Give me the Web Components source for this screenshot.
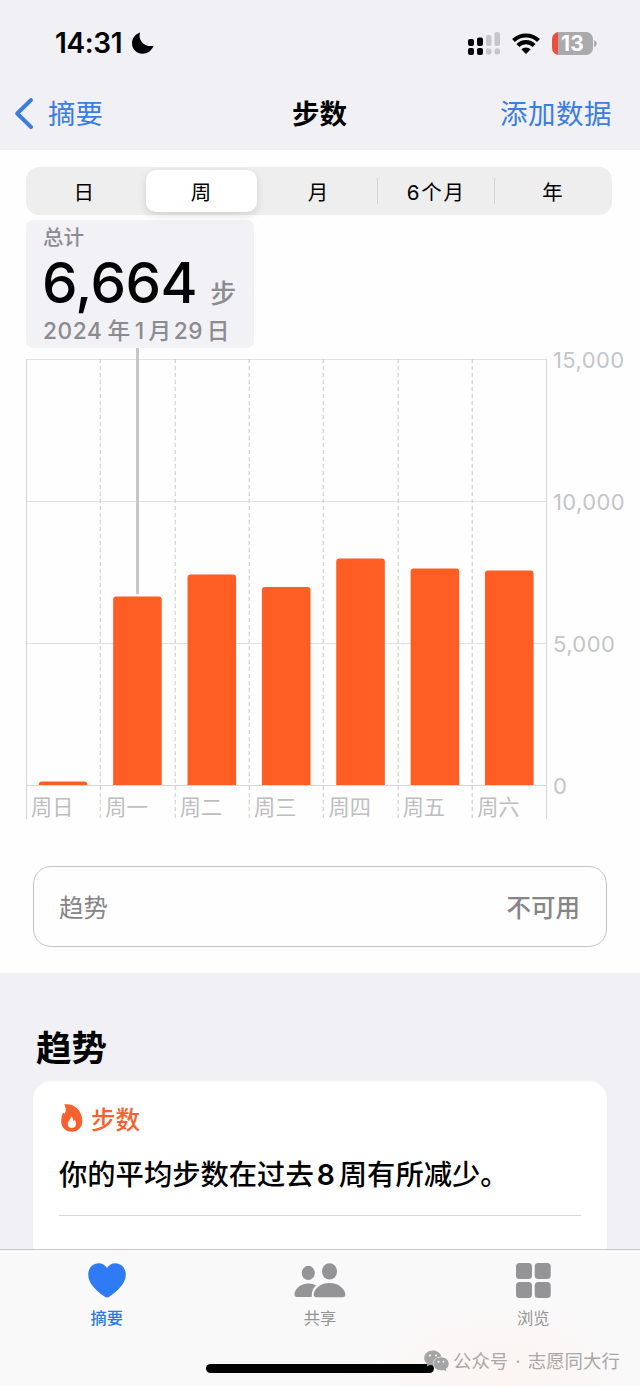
<!DOCTYPE html>
<html lang="zh-CN">
<head>
<meta charset="UTF-8">
<meta name="viewport" content="width=device-width, initial-scale=1.0">
<title>步数</title>
<style>
  html, body {
    margin: 0;
    height: 100%;
  }

  body {
    font-family: Inter, "Noto Sans CJK SC", sans-serif;
    color: #000;
    background: #f0f0f5;
    overflow: hidden;
    --blue: #3b7de0;
    --orange: #fe5d24;
    --grey: #8b8b90;
    --light: #c5c5c7;
  }
</style>
</head>
<body>
<health-app></health-app>

<script>
class StatusBar extends HTMLElement {
  constructor() {
    super();
    this.attachShadow({ mode: "open" });
  }

  connectedCallback() {
    this.render();
  }

  static get styles() {
    return /* css */ `
      :host {
        display: flex;
        align-items: center;
        justify-content: space-between;
        box-sizing: border-box;
        height: 86px;
        padding: 0 43px 0 55px;
      }

      .side {
        display: flex;
        align-items: center;
      }

      .time {
        font-size: 28px;
        font-weight: 600;
        line-height: 34px;
        letter-spacing: -0.4px;
        width: 77px;
        white-space: nowrap;
      }

      svg {
        display: block;
      }

      .wifi {
        margin: 0 12px;
      }

      .battery {
        display: flex;
        align-items: center;
        gap: 1px;
      }

      .level {
        width: 41px;
        height: 23px;
        border-radius: 7px;
        background: linear-gradient(90deg, #e94f3f 6px, #aaaaac 6px);
        color: #fff;
        font-size: 21px;
        font-weight: 700;
        line-height: 24px;
        letter-spacing: 0.3px;
        text-align: center;
      }
    `;
  }

  render() {
    this.shadowRoot.innerHTML = /* html */ `
    <style>${StatusBar.styles}</style>
    <div class="side">
      <span class="time">14:31</span>
      <svg width="22" height="22" viewBox="0 0 22 22"><path d="M8 .4C5.800 8.500 12.500 15.600 21.700 13.800C19.500 18.800 15.500 21.800 10.600 21.800C4.700 21.800 0 17.200 0 11.300C0 6.300 3.200 2 8 .4Z"/></svg>
    </div>
    <div class="side">
      <svg width="32" height="23" viewBox="0 0 32 23">
        <g fill="#000">
          <rect y="7" width="6" height="7" rx="2"/><rect y="16" width="6" height="7" rx="2"/>
          <rect x="9" y="5.500" width="6" height="8.500" rx="2"/><rect x="9" y="16" width="6" height="7" rx="2"/>
        </g>
        <g fill="#c6c6c9">
          <rect x="18" y="3" width="5.500" height="11" rx="2"/><rect x="18" y="16.500" width="5.500" height="6" rx="2"/>
          <rect x="26.500" y="0" width="5.500" height="14" rx="2"/><rect x="26.500" y="16.500" width="5.500" height="6" rx="2"/>
        </g>
      </svg>
      <svg class="wifi" width="28" height="21" viewBox="0 0 28 21">
        <g fill="none" stroke="#000" stroke-width="4.100">
          <path d="M1.500 7.500a18 18 0 0 1 25 0"/>
          <path d="M5.900 12.500a11.500 11.500 0 0 1 16.200 0"/>
        </g>
        <path d="M9.300 16.200a7 7 0 0 1 9.400 0L14 21Z"/>
      </svg>
      <div class="battery">
        <div class="level">13</div>
        <svg width="3" height="7" viewBox="0 0 3 7"><path fill="#aaaaac" d="M0 0q2.800 1 2.800 3.500T0 7Z"/></svg>
      </div>
    </div>
  `;
  }
}

class NavBar extends HTMLElement {
  constructor() {
    super();
    this.attachShadow({ mode: "open" });
  }

  connectedCallback() {
    this.render();
  }

  static get styles() {
    return /* css */ `
      :host {
        display: grid;
        grid-template-columns: 1fr auto 1fr;
        align-items: center;
        height: 56px;
        padding: 0 28px 8px 15px;
        font-size: 27.5px;
        line-height: 40px;
      }

      .back {
        display: flex;
        align-items: center;
        gap: 15px;
        color: var(--blue);
      }

      .back svg {
        margin-bottom: 2px;
      }

      .title {
        font-weight: 600;
        padding-left: 12px;
      }

      .action {
        color: var(--blue);
        text-align: right;
        letter-spacing: 0.5px;
      }
    `;
  }

  render() {
    this.shadowRoot.innerHTML = /* html */ `
    <style>${NavBar.styles}</style>
    <div class="back">
      <svg width="18" height="31" viewBox="0 0 18 31"><path d="M16 2 2.200 15.500l13.800 13.500" fill="none" stroke="currentColor" stroke-width="3.900" stroke-linecap="round" stroke-linejoin="round"/></svg>
      <slot name="back"></slot>
    </div>
    <div class="title"><slot></slot></div>
    <div class="action"><slot name="action"></slot></div>
  `;
  }
}

class SegmentedControl extends HTMLElement {
  constructor() {
    super();
    this.attachShadow({ mode: "open" });
  }

  connectedCallback() {
    this.render();
  }

  static get styles() {
    return /* css */ `
      :host {
        display: grid;
        grid-template-columns: repeat(5, 1fr);
        width: 586px;
        height: 48px;
        border-radius: 13px;
        background: #eeeeef;
        font-size: 20.5px;
        letter-spacing: 1.8px;
      }

      .segment {
        display: flex;
        align-items: center;
        justify-content: center;
        margin: 3px;
        border-radius: 10px;
      }

      .selected {
        background: #fff;
        box-shadow: 0 3px 8px rgba(0, 0, 0, 0.13);
      }

      .divided {
        background: linear-gradient(#d2d2d4, #d2d2d4) right center / 1px 26px no-repeat;
        margin: 3px 0;
        border-radius: 0;
      }
    `;
  }

  render() {
    const labels = this.getAttribute("labels").split(",");
    const selected = Number(this.getAttribute("selected"));
    const segments = labels.map((label, index) => {
      const divided = index > selected && index < labels.length - 1;
      const state = index === selected ? "selected" : divided ? "divided" : "";
      return `<div class="segment ${state}">${label}</div>`;
    });

    this.shadowRoot.innerHTML = /* html */ `
    <style>${SegmentedControl.styles}</style>
    ${segments.join("")}
  `;
  }
}

class ChartCallout extends HTMLElement {
  constructor() {
    super();
    this.attachShadow({ mode: "open" });
  }

  connectedCallback() {
    this.render();
  }

  static get styles() {
    return /* css */ `
      :host {
        display: block;
        box-sizing: border-box;
        width: 228px;
        height: 128px;
        margin-top: 5px;
        padding: 1px 0 0 16px;
        border-radius: 7px;
        background: #f1f1f6;
        color: var(--grey);
        white-space: nowrap;
      }

      .label {
        padding-left: 1px;
        font-size: 20.5px;
        font-weight: 500;
        line-height: 33px;
      }

      .value {
        display: flex;
        align-items: baseline;
        gap: 13px;
        height: 61px;
        line-height: 57px;
      }

      .number {
        font-size: 56.5px;
        font-weight: 500;
        color: #000;
        letter-spacing: -0.5px;
      }

      .unit {
        font-size: 26px;
        font-weight: 500;
      }

      .date {
        padding-left: 1px;
        font-size: 22.7px;
        font-weight: 500;
        line-height: 32px;
        letter-spacing: 0.6px;
      }
    `;
  }

  render() {
    this.shadowRoot.innerHTML = /* html */ `
    <style>${ChartCallout.styles}</style>
    <div class="label"><slot name="label"></slot></div>
    <div class="value">
      <span class="number"><slot></slot></span>
      <span class="unit"><slot name="unit"></slot></span>
    </div>
    <div class="date"><slot name="date"></slot></div>
  `;
  }
}

class StepsChart extends HTMLElement {
  constructor() {
    super();
    this.attachShadow({ mode: "open" });
    this.days = [
      ["周日", 3.5],
      ["周一", 188.5],
      ["周二", 210.5],
      ["周三", 198],
      ["周四", 226.5],
      ["周五", 216.5],
      ["周六", 214.5],
    ];
  }

  connectedCallback() {
    this.render();
  }

  static get styles() {
    return /* css */ `
      :host {
        display: grid;
        grid-template-columns: 521px 1fr;
        height: 471px;
      }

      .plot {
        display: grid;
        grid-template-rows: 437px 34px;
      }

      svg {
        grid-area: 1 / 1 / 3 / 2;
        display: block;
      }

      .days {
        grid-area: 2 / 1;
        display: grid;
        grid-template-columns: repeat(7, 74.36px);
        color: #bdbdbf;
        font-size: 21.2px;
        line-height: 45px;
      }

      .days span {
        padding-left: 5px;
      }

      .axis {
        display: flex;
        flex-direction: column;
        justify-content: space-between;
        height: 456px;
        padding-left: 6px;
        color: var(--light);
        font-size: 22px;
        line-height: 30px;
        margin-top: -3px;
        letter-spacing: 0.4px;
      }
    `;
  }

  render() {
    const step = 74.36;
    const columns = this.days.map((day, index) => Math.round(index * step) + 0.2);
    // Dashed day separators, the first and last edges are solid
    const separators = columns.slice(1).map((x) => `<path d="M${x} 11V471" stroke="#c9c9cb" stroke-dasharray="4 3"/>`);
    const bars = this.days.map(([, height], index) => {
      const x = index * step + 12.8;
      const radius = Math.min(3, height);
      return `<path fill="#fe5d24" d="M${x} 437v${radius - height}q0 ${-radius} ${radius} ${-radius}h${48.600 - radius * 2}q${radius} 0 ${radius} ${radius}V437Z"/>`;
    });

    this.shadowRoot.innerHTML = /* html */ `
    <style>${StepsChart.styles}</style>
    <div class="plot">
      <svg width="521" height="471" viewBox="0 0 521 471">
        <g stroke="#e2e2e4">
          <path d="M0 11.500H521M0 153.500H521M0 295.500H521"/>
          <path d="M.5 11V471M520.500 11V471M0 437.500H521" stroke="#d6d6d8"/>
        </g>
        ${separators.join("")}
        <path d="M111.500 0V246" stroke="#c7c7c9" stroke-width="3"/>
        ${bars.join("")}
      </svg>
      <div class="days">${this.days.map(([name]) => `<span>${name}</span>`).join("")}</div>
    </div>
    <div class="axis">
      <span>15,000</span>
      <span>10,000</span>
      <span>5,000</span>
      <span>0</span>
    </div>
  `;
  }
}

class TrendRow extends HTMLElement {
  constructor() {
    super();
    this.attachShadow({ mode: "open" });
  }

  connectedCallback() {
    this.render();
  }

  static get styles() {
    return /* css */ `
      :host {
        display: flex;
        align-items: center;
        justify-content: space-between;
        box-sizing: border-box;
        width: 574px;
        height: 81px;
        margin: 47px 0 0 7px;
        padding: 0 26px 0 25px;
        border: 1px solid #c4c4c7;
        border-radius: 18px;
        color: #858587;
        font-size: 24.5px;
      }

      .state {
        font-weight: 500;
      }
    `;
  }

  render() {
    this.shadowRoot.innerHTML = /* html */ `
    <style>${TrendRow.styles}</style>
    <slot></slot>
    <span class="state"><slot name="state"></slot></span>
  `;
  }
}

class TrendCard extends HTMLElement {
  constructor() {
    super();
    this.attachShadow({ mode: "open" });
  }

  connectedCallback() {
    this.render();
  }

  static get styles() {
    return /* css */ `
      :host {
        display: block;
        box-sizing: border-box;
        width: 574px;
        height: 169px;
        padding: 18px 26px 0;
        border-radius: 18px 18px 0 0;
        background: #fff;
      }

      .head {
        display: flex;
        align-items: center;
        gap: 8px;
        height: 38px;
        padding-left: 2px;
        color: #f5622d;
        font-size: 24.5px;
        font-weight: 500;
      }

      .summary {
        height: 78px;
        border-bottom: 1px solid #d8d8da;
        font-size: 28.3px;
        font-weight: 500;
        line-height: 76px;
        white-space: nowrap;
      }
    `;
  }

  render() {
    this.shadowRoot.innerHTML = /* html */ `
    <style>${TrendCard.styles}</style>
    <div class="head">
      <svg width="22" height="28" viewBox="0 0 22 28"><path fill="currentColor" fill-rule="evenodd" d="M3.200 .3C14.500 -.8 21.300 7.500 21.300 17C21.300 23.500 17 27.700 10.800 27.700C4.500 27.700.2 23.500.2 17.500C.2 14 .8 11.500 2.200 8.800L3.700 9.800L4.800 7C4.900 4.800 4.300 2.200 3.200 .3ZM9.800 12.200C10.500 15.200 6.800 16.800 6.800 20.200C6.800 22.500 8.500 23.900 10.700 23.900C13.200 23.900 15 22.300 15 19.900C15 18.300 14.500 17 13.700 16L12.400 17.400C12.600 15.200 11.800 13.400 9.800 12.200Z"/></svg>
      <slot name="kind"></slot>
    </div>
    <div class="summary"><slot></slot></div>
  `;
  }
}

class TabItem extends HTMLElement {
  constructor() {
    super();
    this.attachShadow({ mode: "open" });
  }

  connectedCallback() {
    this.render();
  }

  static get icons() {
    return {
      heart: `<svg width="38" height="35" viewBox="0 0 38 35"><path fill="#2f7af5" d="M19 5C17 1.800 14.200.2 10.800.2C4.500.2.2 5 .2 11.600C.2 21 9 28.500 16.500 33.600Q19 35.400 21.500 33.600C29 28.500 37.800 21 37.800 11.600C37.800 5 33.500.2 27.200.2C23.800.2 21 1.800 19 5Z"/></svg>`,
      people: `<svg width="52" height="35" viewBox="0 0 52 35"><g fill="currentColor"><ellipse cx="14.300" cy="9.900" rx="6.500" ry="7.100"/><path d="M14.500 20.500c3.200 0 5.700.8 7.600 2c-2.800 2.400-4.600 6-4.300 11.600H3C1.300 34.100.5 33.100.5 31.600C.5 26 6.500 20.500 14.500 20.500Z"/><ellipse cx="35.500" cy="8.400" rx="7.500" ry="8.200"/><path d="M35.500 20C45 20 51.300 26.500 51.300 31.500Q51.300 34.200 48.500 34.200H22.500Q19.700 34.200 19.700 31.500C19.700 26.500 26 20 35.500 20Z"/></g></svg>`,
      grid: `<svg width="35" height="35" viewBox="0 0 35 35"><g fill="currentColor"><rect width="16" height="16" rx="3.500"/><rect x="18.700" width="16" height="16" rx="3.500"/><rect y="19" width="16" height="16" rx="3.500"/><rect x="18.700" y="19" width="16" height="16" rx="3.500"/></g></svg>`,
    };
  }

  static get styles() {
    return /* css */ `
      :host {
        display: flex;
        flex-direction: column;
        align-items: center;
        gap: 7px;
        color: #949496;
        font-size: 16.3px;
        line-height: 26px;
      }

      :host([active]) {
        color: #3079d8;
        font-weight: 500;
      }

      svg {
        display: block;
      }
    `;
  }

  render() {
    this.shadowRoot.innerHTML = /* html */ `
    <style>${TabItem.styles}</style>
    ${TabItem.icons[this.getAttribute("icon")]}
    <span><slot></slot></span>
  `;
  }
}

class TabBar extends HTMLElement {
  constructor() {
    super();
    this.attachShadow({ mode: "open" });
  }

  connectedCallback() {
    this.render();
  }

  static get styles() {
    return /* css */ `
      :host {
        display: block;
        box-sizing: border-box;
        height: 137px;
        border-top: 1px solid #c9c9cc;
        background: radial-gradient(ellipse 150px 80px at 500px 125px, #fcf5f2, transparent), #f9f9fa;
      }

      .tabs {
        display: grid;
        grid-template-columns: repeat(3, 1fr);
        height: 101px;
        padding-top: 13px;
      }

      .indicator {
        width: 228px;
        height: 9px;
        margin: 0 auto;
        border-radius: 5px;
        background: #000;
      }
    `;
  }

  render() {
    this.shadowRoot.innerHTML = /* html */ `
    <style>${TabBar.styles}</style>
    <div class="tabs"><slot></slot></div>
    <div class="indicator"></div>
  `;
  }
}

class AccountMark extends HTMLElement {
  constructor() {
    super();
    this.attachShadow({ mode: "open" });
  }

  connectedCallback() {
    this.render();
  }

  static get styles() {
    return /* css */ `
      :host {
        position: absolute;
        left: 424px;
        top: 1348px;
        display: flex;
        align-items: center;
        gap: 4px;
        color: #a9a7a7;
        font-size: 18.4px;
        line-height: 26px;
        word-spacing: 2px;
        white-space: nowrap;
      }
    `;
  }

  render() {
    this.shadowRoot.innerHTML = /* html */ `
    <style>${AccountMark.styles}</style>
    <svg width="25" height="22" viewBox="0 0 25 22">
      <path fill="#a5a4a4" d="M9 .5C4 .5.200 3.700.200 8c0 2.300 1.200 4.400 3.200 5.800L2.700 16.500l3.200-1.600Q7.500 15.300 9.100 15.300C8.300 10 12.300 6.500 17.400 6.500C16.500 3 13 .5 9 .5Z"/>
      <path fill="#a5a4a4" d="M17 7.300c-4.300 0-7.500 2.800-7.500 6.500s3.200 6.500 7.500 6.500q1.400 0 2.700-.4L22.500 21.500l-.7-2.600c1.700-1.100 2.900-2.900 2.900-5.100c0-3.700-3.300-6.500-7.700-6.500Z"/>
      <g fill="#f9f7f6"><circle cx="6" cy="5.500" r="1.100"/><circle cx="12" cy="5.500" r="1.100"/><circle cx="14.500" cy="11.700" r="1"/><circle cx="19.500" cy="11.700" r="1"/></g>
    </svg>
    <slot></slot>
  `;
  }
}

class HealthApp extends HTMLElement {
  constructor() {
    super();
    this.attachShadow({ mode: "open" });
  }

  connectedCallback() {
    this.render();
  }

  static get styles() {
    return /* css */ `
      :host {
        display: flex;
        flex-direction: column;
        width: 640px;
        height: 1386px;
      }

      header {
        height: 150px;
      }

      .chart {
        box-sizing: border-box;
        height: 823px;
        padding: 17px 0 0 26px;
        background: #fefefe;
      }

      .trends {
        box-sizing: border-box;
        height: 276px;
        padding: 50px 33px 0;
      }

      h2 {
        margin: 0 0 6px 3px;
        font-size: 35.5px;
        font-weight: 600;
        line-height: 52px;
      }

      i {
        font-style: normal;
        margin: 0 2px 0 3.5px;
      }

      i.year {
        margin: 0 4px 0 5px;
      }

      b {
        font-weight: 600;
        margin: 0 4px 0 3px;
      }
    `;
  }

  render() {
    this.shadowRoot.innerHTML = /* html */ `
    <style>${HealthApp.styles}</style>
    <header>
      <status-bar></status-bar>
      <nav-bar>
        <span slot="back">摘要</span>
        步数
        <span slot="action">添加数据</span>
      </nav-bar>
    </header>
    <section class="chart">
      <segmented-control labels="日,周,月,6个月,年" selected="1"></segmented-control>
      <chart-callout>
        <span slot="label">总计</span>
        6,664
        <span slot="unit">步</span>
        <span slot="date">2024<i class="year">年</i>1<i>月</i>29<i>日</i></span>
      </chart-callout>
      <steps-chart></steps-chart>
      <trend-row>趋势<span slot="state">不可用</span></trend-row>
    </section>
    <section class="trends">
      <h2>趋势</h2>
      <trend-card>
        <span slot="kind">步数</span>
        <span>你的平均步数在过去<b>8</b>周有所减少。</span>
      </trend-card>
    </section>
    <tab-bar>
      <tab-item icon="heart" active>摘要</tab-item>
      <tab-item icon="people">共享</tab-item>
      <tab-item icon="grid">浏览</tab-item>
    </tab-bar>
    <account-mark>公众号 · 志愿同大行</account-mark>
  `;
  }
}

customElements.define("status-bar", StatusBar);
customElements.define("nav-bar", NavBar);
customElements.define("segmented-control", SegmentedControl);
customElements.define("chart-callout", ChartCallout);
customElements.define("steps-chart", StepsChart);
customElements.define("trend-row", TrendRow);
customElements.define("trend-card", TrendCard);
customElements.define("tab-item", TabItem);
customElements.define("tab-bar", TabBar);
customElements.define("account-mark", AccountMark);
customElements.define("health-app", HealthApp);
</script>
</body>
</html>
